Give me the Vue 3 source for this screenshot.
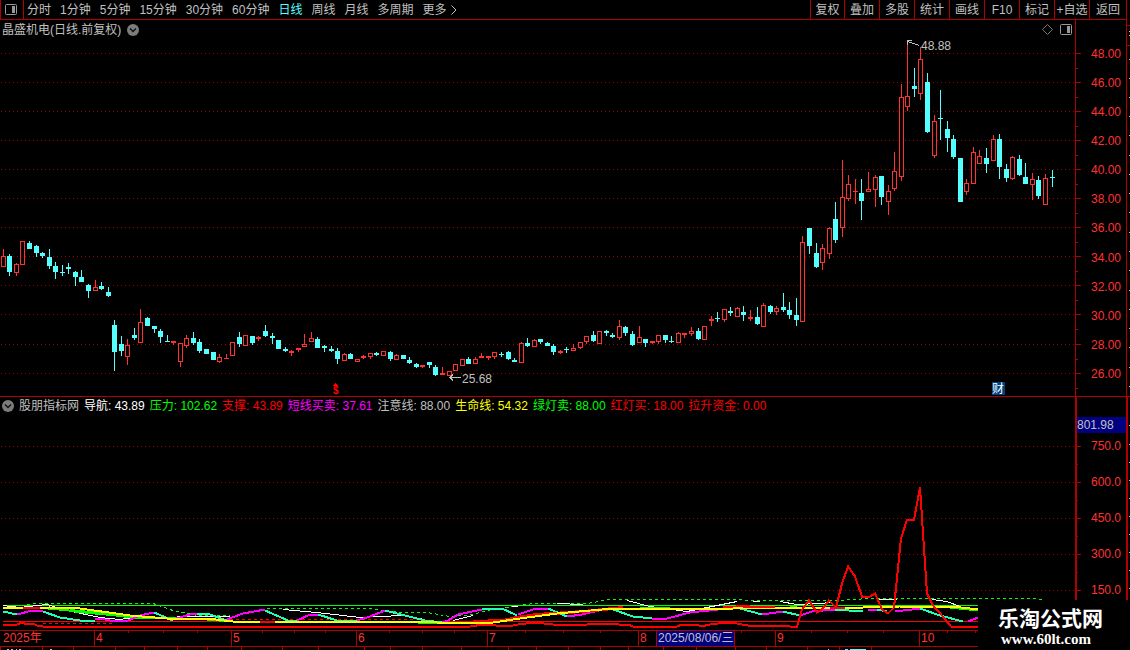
<script setup>
const periods = ['分时', '1分钟', '5分钟', '15分钟', '30分钟', '60分钟', '日线', '周线', '月线', '多周期']
const tools = ['复权', '叠加', '多股', '统计', '画线', 'F10', '标记', '+自选', '返回']
const prices = ['48.00', '46.00', '44.00', '42.00', '40.00', '38.00', '36.00', '34.00', '32.00', '30.00', '28.00', '26.00']
const priceRows = [53, 82, 111, 140, 169, 198, 227, 256, 285, 314, 344, 373]
const levels = ['750.0', '600.0', '450.0', '300.0', '150.0']
const levelRows = [446, 482, 518, 554, 590]

const legend = [
  { name: '导航', value: '43.89', tone: 'white' },
  { name: '压力', value: '102.62', tone: 'green' },
  { name: '支撑', value: '43.89', tone: 'red' },
  { name: '短线买卖', value: '37.61', tone: 'magenta' },
  { name: '注意线', value: '88.00', tone: 'grey' },
  { name: '生命线', value: '54.32', tone: 'yellow' },
  { name: '绿灯卖', value: '88.00', tone: 'green' },
  { name: '红灯买', value: '18.00', tone: 'red' },
  { name: '拉升资金', value: '0.00', tone: 'red' }
]

// each entry: x, high, low, body top, body bottom; "u" rises, "d" falls
const series = `3 249 267 256 267 u;9 254 276 256 272 d;16 263 276 264 273 u;22 241 265 241 265 u;29 241 249 243 249 d
36 245 257 246 253 d;42 252 258 253 256 d;49 249 269 257 266 d;55 262 279 266 272 d;62 265 276 272 273 d
68 263 274 267 269 d;75 271 286 272 277 d;81 270 282 277 282 d;88 284 298 285 291 d;95 280 291 287 291 u
101 282 290 286 289 d;108 287 297 292 296 d;114 320 371 325 352 d;121 336 356 344 351 d;127 339 365 345 357 u
134 328 340 335 338 d;140 309 343 322 343 u;147 317 326 318 326 d;154 326 333 326 329 d;160 329 343 331 337 d
167 335 342 341 342 d;173 341 345 341 343 u;180 343 367 343 362 u;186 335 348 338 346 u;193 332 345 338 343 d
199 339 353 342 351 d;206 349 354 349 354 d;213 352 360 352 360 d;219 354 363 357 362 u;226 354 359 358 359 u
232 342 356 342 356 u;239 332 347 337 344 d;245 335 346 335 346 u;252 336 345 336 343 d;258 336 341 337 339 u
265 325 337 331 336 d;272 333 344 336 338 d;278 340 349 340 349 d;285 347 352 349 351 d;291 350 356 351 353 u
298 348 352 348 350 u;304 334 347 344 347 u;311 332 342 338 342 u;317 337 348 339 348 d;324 345 352 346 348 d
331 346 352 349 351 d;337 348 364 351 359 d;344 353 361 354 361 u;350 353 359 354 359 d;357 359 362 359 362 u
363 355 359 356 358 u;370 353 359 353 357 u;376 352 356 353 355 d;383 351 356 351 356 u;390 351 361 352 359 d
396 354 360 355 360 u;403 355 359 355 359 d;409 357 364 360 363 d;416 363 368 364 367 d;422 365 368 365 367 u
429 362 368 362 365 d;435 365 376 367 375 d;442 367 375 373 375 u;449 371 376 371 376 u;455 364 371 364 371 u
462 359 366 359 366 u;468 357 364 359 364 d;475 357 364 359 364 u;481 353 358 356 358 u;488 356 360 356 358 u
494 352 359 352 357 u;501 352 357 354 355 d;508 351 360 352 359 d;514 358 362 360 362 d;521 342 363 343 363 u
527 338 347 343 346 d;534 339 347 340 347 u;540 339 344 339 342 d;547 342 346 343 346 d;553 344 355 346 352 d
560 350 354 351 353 u;566 347 353 349 350 d;573 344 351 348 351 u;580 342 349 342 348 u;586 336 344 336 342 u
593 331 342 335 341 d;599 331 344 331 344 u;606 330 336 331 333 d;612 333 338 335 337 d;619 320 340 326 338 u
625 326 336 327 333 d;632 331 346 334 345 d;639 326 343 337 343 u;645 339 347 339 343 d;652 341 344 341 343 u
658 335 344 335 342 u;665 335 343 335 340 d;671 336 343 341 342 d;678 332 343 333 343 u;684 333 338 333 335 u
691 327 336 331 334 u;698 328 340 331 339 d;704 326 340 326 340 u;711 316 326 319 321 u;717 312 322 318 319 d
724 309 322 309 320 u;730 307 316 311 313 d;737 307 317 308 317 u;743 306 321 312 315 d;750 310 321 317 319 u
757 307 325 317 324 d;763 303 327 305 327 u;770 305 314 306 312 d;776 306 315 308 312 u;783 293 312 307 310 d
789 302 319 310 315 d;796 298 326 315 320 d;802 236 322 242 322 u;809 228 254 228 246 d;816 243 268 253 267 d
822 244 270 248 263 u;829 227 259 228 254 u;835 202 243 219 240 d;842 160 237 197 228 u;848 175 201 184 199 u
855 179 204 191 192 u;861 179 220 193 201 d;868 172 192 189 192 u;875 175 207 177 190 u;881 176 205 176 197 d
888 185 215 191 202 u;894 152 191 171 189 u;901 84 181 97 177 u;907 41 111 96 107 u;914 68 97 86 89 d
920 47 100 59 94 u;927 73 133 82 132 d;934 115 158 121 156 u;940 90 140 118 119 d;947 121 152 129 138 d
953 135 159 139 157 d;960 158 202 158 202 d;966 179 195 183 192 u;973 147 184 152 184 u;979 150 164 156 164 u
986 148 173 158 164 d;993 135 161 139 161 u;999 134 179 139 167 d;1006 164 182 169 178 d;1012 156 180 157 179 u
1019 155 176 159 175 d;1025 163 184 177 184 d;1032 173 200 179 185 u;1038 176 199 180 196 d;1045 174 205 178 205 u
1052 170 187 177 178 d`
const candles = series.split(/[;\n]/).map((row) => {
  const [x, high, low, top, bottom, dir] = row.trim().split(' ')
  return { x: +x, high: +high, low: +low, top: +top, bottom: +bottom, up: dir === 'u' }
})

const lines = [
  { kind: 'green dash', pts: ['27,604 33,603 153,603 173,610 197,615 230,615', '267,608 370,608 400,612 427,612 450,616 473,614 487,610 533,603 587,603 610,599 740,599 750,600 844,600 850,599 873,598 1036,598 1042,599'] },
  { kind: 'green', pts: ['3,605 978,605'] },
  { kind: 'red', pts: ['3,621 978,621'] },
  { kind: 'red dash', pts: ['43,623 114,623', '230,619 420,619'] },
  { kind: 'white', pts: ['3,605 20,607 47,604 67,610 100,617 120,619 133,617 167,617 187,616 230,616', '283,609 317,612 360,617 402,615 425,619', '453,620 473,615', '512,606 518,606', '557,603 583,604', '627,600 650,606 687,611 717,605 737,601', '753,601 760,601', '780,601 797,604 820,603 830,602', '878,599 897,599', '932,599 947,601 960,606'] },
  { kind: 'green thick', pts: ['48,608 90,612 133,617 150,617 207,619 230,621', '417,622 460,623', '640,607 700,609 713,609', '790,606 803,608', '950,607 978,610'] },
  { kind: 'green bold', pts: ['70,610 90,612 133,616'] },
  { kind: 'teal thick', pts: ['3,611 17,614', '43,611 60,617 80,620 95,620', '154,612 173,620', '197,613 207,613 227,620', '265,610 288,620 297,620', '318,614 337,620 357,620', '385,610 425,620 442,622', '482,609 502,608 517,615', '548,608 567,616', '613,609 633,616 652,618', '740,608 762,614', '783,611 800,615', '835,609 863,611', '877,609 887,611', '920,608 940,615 963,621'] },
  { kind: 'magenta thick', pts: ['17,614 32,610 43,611', '95,619 100,618 115,621 128,620 140,615 154,612', '173,619 190,614 197,613', '227,619 243,613 265,609', '297,620 310,614 318,614', '357,620 370,616 385,610', '442,622 448,620 458,614 482,609', '518,614 533,609 548,608', '567,616 582,614 603,609', '652,618 667,618 690,612 737,607', '762,614 783,611', '800,615 812,611 835,609', '868,610 877,609', '895,611 920,608', '968,621 978,617'] },
  { kind: 'red bold', pts: ['473,621 503,620 517,617 537,614 583,611 623,607', '723,607 750,606'] },
  { kind: 'yellow thick', pts: ['3,608 50,607 80,608 130,615 167,618 207,618 233,621 260,621 425,621 437,622 493,622 520,618 557,613 613,608 670,608 717,609 750,607 863,607 900,606 953,606 978,609'] },
  { kind: 'red thick', pts: ['23,607 40,607', '260,621 275,621', '743,606 775,606', '830,607 845,607'] },
  { kind: 'red thick', pts: ['3,624 7,625 17,624 22,622 27,624 33,623 37,625 43,626 470,626 483,624 508,626 518,624 535,622 562,625 587,624 600,623 619,624 628,624 633,626 677,626 682,624 697,624 701,626 710,624 727,622 737,623 753,626 760,625 787,625 790,626 797,626 802,609 809,600 817,612 822,609 829,600 836,607 842,583 848,566 855,576 862,596 870,596 875,593 882,609 888,613 894,607 901,538 907,519 914,519 920,487 927,593 933,605 942,615 951,626 978,626'] }
]

const months = ['2025年', '4', '5', '6', '7', '8', '9', '10']
const upperTicks = [128, 163, 197, 262, 294, 325, 389, 422, 454, 525, 563, 600, 741, 811, 847, 883, 947, 975]
const lowerTicks = [0, 42, 73, 115, 144, 177, 207, 241, 282, 318, 364, 390, 422, 461, 508, 536, 568, 600, 628, 663, 696, 735, 766, 807, 839, 871]
const edgeMarks = [31, 35, 59, 78, 97, 116, 135, 155, 174, 193, 212, 232, 251, 270, 290, 309, 328, 347, 367, 386, 425, 444, 462, 480, 498, 516, 534, 552, 570, 588]
</script>

<template>
  <main class="terminal">
    <header class="toolbar">
      <button class="panel-toggle" aria-label="侧栏">
        <svg width="12" height="11" viewBox="0 0 12 11"><rect x=".5" y=".5" width="11" height="10" rx="1" fill="none" stroke="#999" /><rect x="7" y="2" width="3" height="7" fill="#999" /></svg>
      </button>
      <nav class="periods">
        <button v-for="p in periods" :key="p" :class="{ active: p === '日线' }">{{ p }}</button>
        <button class="more">更多<svg width="6" height="10" viewBox="0 0 6 10"><path d="M.5 .5 5 5 .5 9.500" fill="none" stroke="#c0c0c0" /></svg></button>
      </nav>
      <div class="tools">
        <button v-for="t in tools" :key="t">{{ t }}</button>
      </div>
    </header>

    <section class="pane price-pane">
      <div class="plot">
        <div class="title-row">
          <h1>晶盛机电(日线.前复权)</h1>
          <button class="round" aria-label="展开">
            <svg width="12" height="12" viewBox="0 0 12 12"><circle cx="6" cy="6" r="6" fill="#7c7c7c" /><path d="m3 4.500 3 3 3-3" fill="none" stroke="#111" stroke-width="1.500" /></svg>
          </button>
          <div class="pane-icons">
            <svg width="11" height="11" viewBox="0 0 11 11"><path d="M5.500.500 10.500 5.500 5.500 10.500.500 5.500Z" fill="none" stroke="#777" /></svg>
            <svg width="12" height="11" viewBox="0 0 12 11"><rect x=".5" y=".5" width="11" height="10" rx="1" fill="none" stroke="#999" /><rect x="7" y="2" width="3" height="7" fill="#999" /></svg>
          </div>
        </div>
        <svg class="chart" viewBox="0 38 1075 358" preserveAspectRatio="none" shape-rendering="crispEdges">
          <line v-for="y in priceRows" :key="y" class="grid" x1="1" x2="1075" :y1="y + 0.5" :y2="y + 0.5" />
          <g v-for="c in candles" :key="c.x" :class="c.up ? 'up' : 'down'">
            <rect class="wick" :x="c.x" :y="c.high" width="1" :height="c.low - c.high" />
            <rect class="wick" :x="c.x - 2" :y="c.top" width="5" :height="c.bottom - c.top" />
            <rect v-if="c.up && c.bottom - c.top > 2" class="hollow" :x="c.x - 1" :y="c.top + 1" width="3" :height="c.bottom - c.top - 2" />
          </g>
          <path class="note-line" d="M907.500 44.500V40.500H912M908 41.500l11 4" />
          <path class="note-line" d="M449 377.500H461M453 374.500l-3 3 3 3" />
          <text class="note" x="921" y="50">48.88</text>
          <text class="note" x="462" y="383">25.68</text>
          <path d="m335.500 383 3 3h-6z" fill="#f00" />
          <text class="dividend" x="333" y="394">$</text>
          <rect x="992" y="382" width="13" height="13" fill="#004080" />
          <text class="report" x="992" y="393">财</text>
        </svg>
      </div>
      <div class="axis">
        <svg class="ticks" viewBox="0 20 6 376" preserveAspectRatio="none" shape-rendering="crispEdges">
          <g v-for="y in priceRows" :key="y" fill="#b00000">
            <rect x="0" :y="y" width="5" height="1" />
            <rect x="0" :y="y + 15" width="2" height="1" />
          </g>
        </svg>
        <ul class="labels"><li v-for="p in prices" :key="p">{{ p }}</li></ul>
      </div>
      <div class="edge"></div>
    </section>

    <section class="pane indicator-pane">
      <div class="plot">
        <div class="legend">
          <button class="round" aria-label="指标">
            <svg width="12" height="12" viewBox="0 0 12 12"><circle cx="6" cy="6" r="6" fill="#7c7c7c" /><path d="m3 4.500 3 3 3-3" fill="none" stroke="#111" stroke-width="1.500" /></svg>
          </button>
          <h2>股朋指标网</h2>
          <span v-for="l in legend" :key="l.name" :class="l.tone">{{ l.name }}: {{ l.value }}</span>
        </div>
        <svg class="chart" viewBox="0 414 1075 216" preserveAspectRatio="none" shape-rendering="crispEdges">
          <line v-for="y in levelRows" :key="y" class="grid" x1="1" x2="1075" :y1="y + 0.5" :y2="y + 0.5" />
          <g v-for="(l, i) in lines" :key="i" class="curve" :class="l.kind" transform="translate(0 .5)">
            <polyline v-for="p in l.pts" :key="p" :points="p" />
          </g>
        </svg>
      </div>
      <div class="axis">
        <svg class="ticks" viewBox="0 397 6 233" preserveAspectRatio="none" shape-rendering="crispEdges">
          <g v-for="y in levelRows" :key="y" fill="#b00000">
            <rect x="0" :y="y" width="4" height="1" />
            <rect x="0" :y="y + 18" width="1" height="1" />
          </g>
        </svg>
        <div class="cursor-value">801.98</div>
        <ul class="labels"><li v-for="v in levels" :key="v">{{ v }}</li></ul>
      </div>
      <div class="edge"></div>
    </section>

    <footer class="timeline">
      <svg class="time-ticks" viewBox="0 630 1130 20" preserveAspectRatio="none" shape-rendering="crispEdges" fill="#b00000">
        <rect v-for="x in upperTicks" :key="'u' + x" :x="x" y="630" width="1" height="3" />
        <rect v-for="x in lowerTicks" :key="'l' + x" :x="x" y="647" width="1" height="3" />
        <path d="M7 649h2v1h-2zM11 649h2v1h-2zM16 649h1v1h-1zM19 649h2v1h-2zM50 649h2v1h-2z" fill="#c0c0c0" />
        <path d="M828 649h1v1h-1zM845 649h3v1h-3zM850 649h16v1h-16z" fill="#5ff" />
      </svg>
      <div class="months">
        <span v-for="m in months" :key="m" class="month">{{ m }}<time v-if="m === '8'" class="cursor-date">2025/08/06/三</time></span>
      </div>
    </footer>

    <svg class="edge-marks" viewBox="0 0 3 650" preserveAspectRatio="none" shape-rendering="crispEdges">
      <rect v-for="y in edgeMarks" :key="y" x="2" :y="y" width="1" height="1" fill="#c0c0c0" />
      <path d="M0 25h3v1h-3zM0 45h3v1h-3z" fill="#b00000" />
    </svg>
    <aside class="brand"><strong>乐淘公式网</strong><a href="#">www.60lt.com</a></aside>
  </main>
</template>

<style>
body {
  margin: 0;
  background: #000;
}
</style>

<style scoped>
.terminal {
  position: relative;
  display: grid;
  grid-template-rows: 20px minmax(377px, 377fr) minmax(233px, 233fr) 20px;
  min-height: 100vh;
  overflow: hidden;
  background: #000;
  color: #c0c0c0;
  font: 12px/16px "Liberation Sans", "Noto Sans CJK SC", sans-serif;
}
button {
  padding: 0;
  border: 0;
  background: none;
  color: inherit;
  font: inherit;
  white-space: nowrap;
}
svg { display: block; }
h1, h2 { margin: 0; font: inherit; white-space: nowrap; }
ul { margin: 0; padding: 0; list-style: none; }

.toolbar {
  display: flex;
  box-sizing: border-box;
  margin-right: 3px;
  border: solid #b00000;
  border-width: 0 1px 1px;
}
.panel-toggle {
  width: 23px;
  padding-left: 4px;
  border-right: 1px solid #b00000;
}
.periods {
  display: flex;
  flex: 1;
  gap: 9px;
  padding-left: 3px;
}
.periods .active { color: #54ffff; }
.more { display: flex; align-items: center; gap: 4px; }
.tools { display: flex; }
.tools button {
  box-sizing: border-box;
  width: 35px;
  border-left: 1px solid #b00000;
}
.tools button:first-child { width: 34px; }
.tools button:last-child { width: 37px; }

.pane {
  display: grid;
  grid-template-columns: minmax(0, 1fr) 51px 4px;
}
.price-pane { border-bottom: 1px solid #b00000; }
.plot {
  display: grid;
  grid-template-rows: 18px minmax(0, 1fr);
  min-width: 0;
}
.indicator-pane .plot { grid-template-rows: 17px minmax(0, 1fr); }
.chart {
  width: 100%;
  height: 100%;
  overflow: visible;
}
.grid {
  stroke: #a00000;
  stroke-dasharray: 1 3;
}
.title-row {
  display: flex;
  align-items: center;
  gap: 6px;
  padding: 1px 3px 0 2px;
}
.pane-icons {
  display: flex;
  gap: 7px;
  margin-left: auto;
}
.up .wick { fill: #ff3232; }
.up .hollow { fill: #000; }
.down .wick { fill: #54ffff; }
.note { fill: #c0c0c0; }
.note-line { fill: none; stroke: #c0c0c0; }
.dividend {
  fill: #f00;
  font-size: 10px;
  font-weight: bold;
}
.report { fill: #fff; }

.axis {
  position: relative;
  display: flex;
  flex-direction: column;
  border-left: 1px solid #b00000;
  color: #ff3232;
}
.indicator-pane .axis { border-left-width: 2px; }
.edge { border-left: 1px solid #b00000; }
.indicator-pane .edge { border-left-width: 2px; }
.ticks {
  position: absolute;
  inset: 0 auto 0 0;
  width: 6px;
  height: 100%;
}
.labels {
  display: flex;
  flex: 1;
  flex-direction: column;
  justify-content: space-between;
  padding: 27px 5px 15px 0;
  line-height: 14px;
  text-align: right;
}
.indicator-pane .labels { padding: 6px 5px 33px 0; }
.cursor-value {
  margin-top: 20px;
  background: #000080;
  color: #c0c0c0;
}

.legend {
  display: flex;
  align-items: center;
  gap: 5px;
  padding-left: 2px;
  white-space: nowrap;
}
.white { color: #fff; stroke: #fff; }
.green { color: #00ff00; stroke: #00ff00; }
.red { color: #f00; stroke: #f00; }
.magenta { color: #f0f; stroke: #f0f; }
.yellow { color: #ff0; stroke: #ff0; }
.teal { stroke: #20ffb8; }
.legend span { stroke: none; }
.curve { fill: none; stroke-width: 1; }
.thick { stroke-width: 2; }
.bold { stroke-width: 3; }
.dash { stroke-dasharray: 3 3; }

.timeline { position: relative; }
.time-ticks {
  position: absolute;
  inset: 0;
  width: 100%;
  height: 100%;
}
.months {
  display: grid;
  grid-template-columns: 94fr 137fr 125fr 131fr 151fr 137fr 144fr 211fr;
  border: solid #b00000;
  border-width: 1px 0;
  color: #ff3232;
  line-height: 15px;
}
.month {
  position: relative;
  box-sizing: border-box;
  padding-left: 1px;
  border-left: 1px solid #b00000;
}
.month:first-child { padding-left: 3px; border-left: 0; }
.cursor-date {
  position: absolute;
  top: 0;
  left: 17px;
  padding: 0 1px;
  border-right: 1px solid #b00000;
  border-left: 1px solid #b00000;
  background: #000080;
  color: #c0c0c0;
  white-space: nowrap;
}
.edge-marks {
  position: absolute;
  top: 0;
  right: 0;
  width: 3px;
  height: 100%;
}
.brand {
  position: absolute;
  right: 0;
  bottom: 0;
  display: flex;
  flex-direction: column;
  box-sizing: border-box;
  width: 152px;
  height: 50px;
  padding: 8px 0 0 20px;
  background: #000;
  color: #fff;
}
.brand strong {
  font-size: 21px;
  line-height: 22px;
}
.brand a {
  padding-left: 3px;
  color: #fff;
  font: bold 15px/18px "Liberation Serif", serif;
  text-decoration: none;
}
</style>
